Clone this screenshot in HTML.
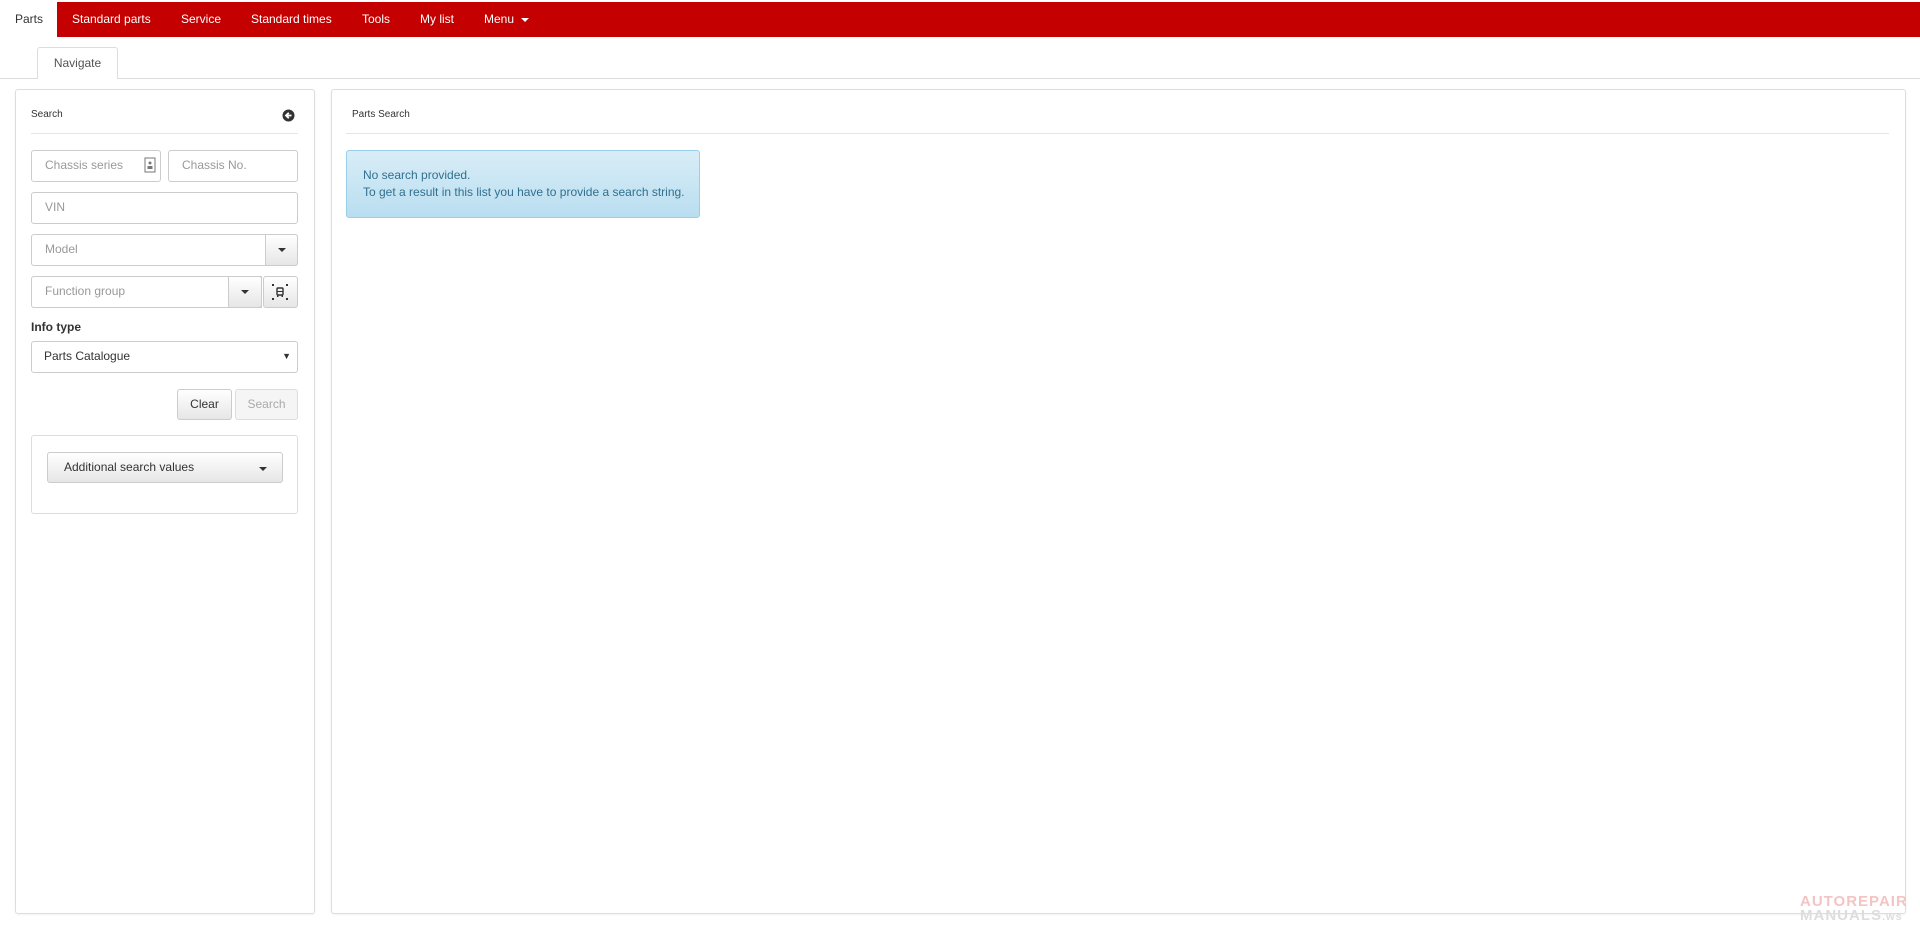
<!DOCTYPE html>
<html><head><meta charset="utf-8"><style>
*{box-sizing:border-box;margin:0;padding:0}
body{width:1920px;height:940px;background:#fff;font-family:"Liberation Sans",Arial,sans-serif;position:relative;overflow:hidden;color:#333}
.a{position:absolute}
.nav{left:0;top:2px;width:1920px;height:35px;background:#c40000}
.nav span{position:absolute;top:10px;color:#fff;font-size:12px;white-space:nowrap}
.parts{left:0;top:0;width:57px;height:37px;background:#fff}
.inp{border:1px solid #ccc;border-radius:3px;background:#fff;font-size:12px;color:#999;padding-left:13px;line-height:29px}
.btn{border:1px solid #ccc;border-radius:3px;background:linear-gradient(#fff,#e6e6e6);font-size:12px;color:#333;text-align:center;line-height:29px}
.car{display:inline-block;width:0;height:0;border-left:4px solid transparent;border-right:4px solid transparent;border-top:4px solid #333;vertical-align:middle}
</style></head><body>
<div class="a nav">
<span style="left:72px">Standard parts</span>
<span style="left:181px">Service</span>
<span style="left:251px">Standard times</span>
<span style="left:362px">Tools</span>
<span style="left:420px">My list</span>
<span style="left:484px">Menu &nbsp;<i class="car" style="border-top-color:#fff"></i></span>
</div>
<div class="a parts"><span class="a" style="left:15px;top:12px;font-size:12px;color:#333">Parts</span></div>
<div class="a" style="left:0;top:78px;width:1920px;border-top:1px solid #ddd"></div>
<div class="a" style="left:37px;top:47px;width:81px;height:32px;border:1px solid #ddd;border-bottom:none;border-radius:3px 3px 0 0;background:#fff;font-size:12px;text-align:center;line-height:30px;color:#555">Navigate</div>

<div class="a" style="left:15px;top:89px;width:300px;height:825px;border:1px solid #ddd;border-radius:3px;box-shadow:0 1px 2px rgba(0,0,0,.05)"></div>
<div class="a" style="left:31px;top:109px;font-size:10px;color:#333">Search</div>
<svg class="a" style="left:282px;top:109px" width="13" height="13" viewBox="0 0 13 13"><circle cx="6.5" cy="6.5" r="6" fill="#333"/><path d="M9.5 6.5H4.5M6.8 3.8L4 6.5l2.8 2.7" stroke="#fff" stroke-width="1.8" fill="none"/></svg>
<div class="a" style="left:31px;top:133px;width:267px;border-top:1px solid #e5e5e5"></div>
<div class="a inp" style="left:31px;top:150px;width:130px;height:32px">Chassis series</div>
<svg class="a" style="left:144px;top:157px" width="12" height="16" viewBox="0 0 12 16"><rect x="1" y="1" width="10" height="14" fill="none" stroke="#777"/><circle cx="6" cy="6" r="1.5" fill="#777"/><rect x="3.5" y="9" width="5" height="3" fill="#777"/></svg>
<div class="a inp" style="left:168px;top:150px;width:130px;height:32px">Chassis No.</div>
<div class="a inp" style="left:31px;top:192px;width:267px;height:32px">VIN</div>
<div class="a inp" style="left:31px;top:234px;width:267px;height:32px">Model</div>
<div class="a btn" style="left:265px;top:234px;width:33px;height:32px;border-radius:0 3px 3px 0"><i class="car"></i></div>
<div class="a inp" style="left:31px;top:276px;width:231px;height:32px;border-radius:3px 0 0 3px">Function group</div>
<div class="a btn" style="left:228px;top:276px;width:34px;height:32px;border-radius:0 3px 3px 0"><i class="car"></i></div>
<div class="a btn" style="left:263px;top:276px;width:35px;height:32px"></div>
<svg class="a" style="left:271px;top:283px" width="18" height="18" viewBox="0 0 18 18" fill="#333"><rect x="6" y="5" width="6" height="7" rx="1" fill="none" stroke="#333" stroke-width="1.4"/><rect x="6" y="8" width="6" height="1"/><rect x="1" y="1" width="2" height="2"/><rect x="15" y="1" width="2" height="2"/><rect x="1" y="15" width="2" height="2"/><rect x="15" y="15" width="2" height="2"/><rect x="6" y="12" width="1.5" height="2"/><rect x="10.5" y="12" width="1.5" height="2"/></svg>
<div class="a" style="left:31px;top:320px;font-size:12px;font-weight:bold;color:#333">Info type</div>
<div class="a inp" style="left:31px;top:341px;width:267px;height:32px;color:#333;padding-left:12px">Parts Catalogue<span style="position:absolute;right:6px;top:0;font-size:9px">▼</span></div>
<div class="a btn" style="left:177px;top:389px;width:55px;height:31px">Clear</div>
<div class="a btn" style="left:235px;top:389px;width:63px;height:31px;color:#aaa;background:#f5f5f5;border-color:#ddd">Search</div>
<div class="a" style="left:31px;top:435px;width:267px;height:79px;border:1px solid #ddd;border-radius:3px"></div>
<div class="a btn" style="left:47px;top:452px;width:236px;height:31px;text-align:left;padding-left:16px">Additional search values<i class="car" style="position:absolute;right:15px;top:14px"></i></div>

<div class="a" style="left:331px;top:89px;width:1575px;height:825px;border:1px solid #ddd;border-radius:3px;box-shadow:0 1px 2px rgba(0,0,0,.05)"></div>
<div class="a" style="left:352px;top:109px;font-size:10px;color:#333">Parts Search</div>
<div class="a" style="left:346px;top:133px;width:1543px;border-top:1px solid #e5e5e5"></div>
<div class="a" style="left:346px;top:150px;width:354px;height:68px;border:1px solid #9acfea;border-radius:3px;background:linear-gradient(#d9edf7,#b9def0);color:#31708f;font-size:12px;line-height:17px;padding:16px 0 0 16px">No search provided.<br>To get a result in this list you have to provide a search string.</div>
<div class="a" style="left:1800px;top:895px;font-size:15px;font-weight:bold;color:#f4c4c4;letter-spacing:1px;line-height:14px">AUTOREPAIR<br><span style="color:#ddd">MANUALS</span><span style="color:#ddd;font-size:11px">.ws</span></div>
</body></html>
